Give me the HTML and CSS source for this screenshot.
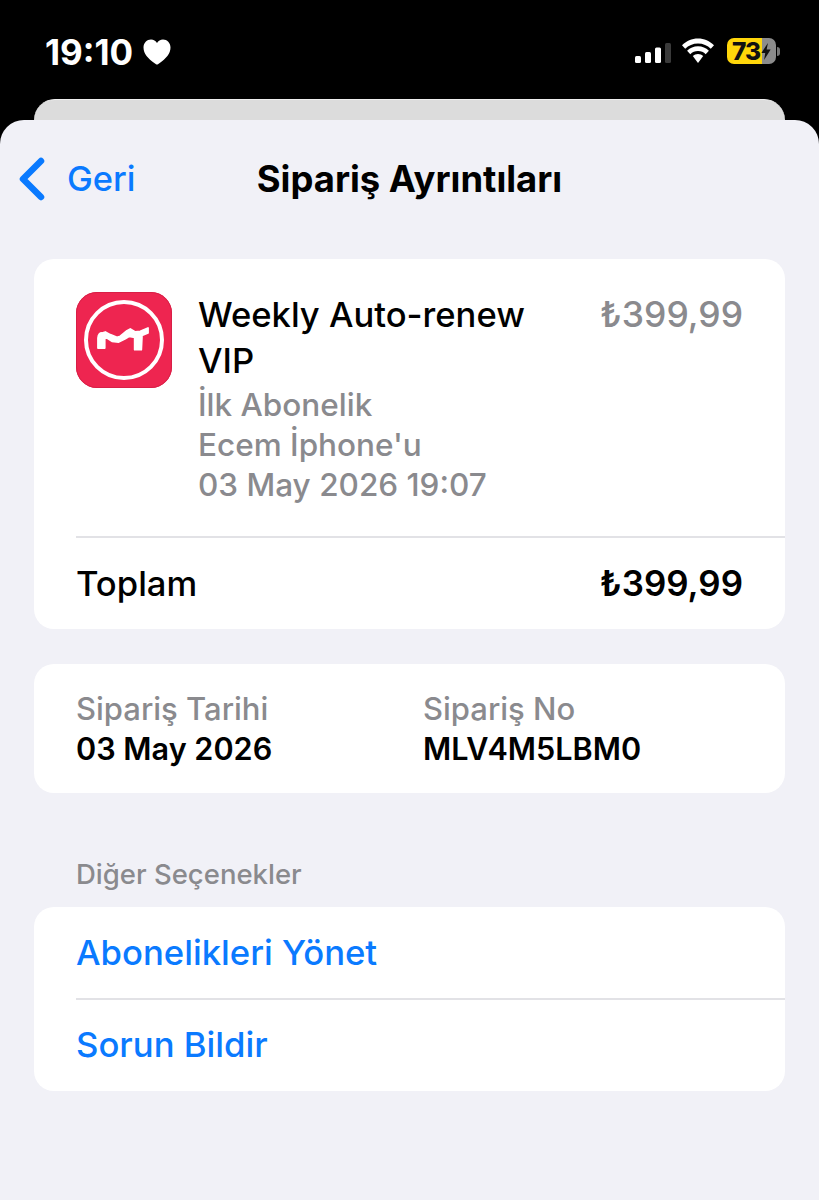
FILE: index.html
```html
<!DOCTYPE html>
<html lang="tr">
<head>
<meta charset="utf-8">
<title>Sipariş Ayrıntıları</title>
<link rel="stylesheet" href="styles.css">
</head>
<body>
<div class="phone">
  <header class="status">
    <div class="status-left">
      <span class="time">19:10</span>
      <svg class="heart" viewBox="0 0 28 26"><path d="M14 25.500C13.400 25.500 12.700 25 11.600 24.200 5 19.600 0.500 14.800 0.500 8.500 0.500 3.800 3.900 0.500 8 0.500 10.600 0.500 12.700 1.800 14 4 15.300 1.800 17.400 0.500 20 0.500 24.100 0.500 27.500 3.800 27.500 8.500 27.500 14.800 23 19.600 16.400 24.200 15.300 25 14.600 25.500 14 25.500Z" fill="#fff"/></svg>
    </div>
    <div class="status-right">
      <svg class="signal" viewBox="0 0 36 20"><rect x="0" y="13" width="6" height="7" rx="1.500" fill="#fff"/><rect x="10" y="9" width="6" height="11" rx="1.500" fill="#fff"/><rect x="20" y="4.500" width="6" height="15.500" rx="1.500" fill="#fff"/><rect x="30" y="0" width="6" height="20" rx="1.500" fill="#3a3a3a"/></svg>
      <svg class="wifi" viewBox="0 0 34 26"><path d="M17 5.500C22 5.500 26.500 7.500 29.800 10.800L33 7.300C28.800 3 23.200 0.500 17 0.500S5.200 3 1 7.300L4.200 10.800C7.500 7.500 12 5.500 17 5.500Z" fill="#fff"/><path d="M17 13C20 13 22.700 14.200 24.700 16.200L27.900 12.700C25 9.900 21.200 8.200 17 8.200S9 9.900 6.100 12.700L9.300 16.200C11.300 14.200 14 13 17 13Z" fill="#fff"/><path d="M17 16C15 16 13.200 16.800 11.800 18.100L17 25 22.200 18.100C20.800 16.800 19 16 17 16Z" fill="#fff"/></svg>
      <div class="battery">
        <div class="battery-body"><span class="battery-num">73</span>
          <svg class="bolt" viewBox="0 0 12 22"><path d="M8.500 0 0 13H5L3.500 22 12 8.500H6.800Z" fill="#111"/></svg>
        </div>
        <span class="battery-cap"></span>
      </div>
    </div>
  </header>
  <div class="sheet-back"></div>
  <main class="sheet">
    <nav class="nav">
      <a class="back">
        <svg class="chevron" viewBox="0 0 28 44"><path d="M23 4 5 22 23 40" fill="none" stroke="#0a7aff" stroke-width="6.500" stroke-linecap="round" stroke-linejoin="round"/></svg>
        <span>Geri</span>
      </a>
      <h1 class="title">Sipariş Ayrıntıları</h1>
    </nav>

    <section class="card order">
      <div class="item">
        <svg class="app-icon" viewBox="0 0 96 96">
          <rect width="96" height="96" rx="21" fill="#ee2550"/>
          <rect x="0.500" y="0.500" width="95" height="95" rx="20.500" fill="none" stroke="#d81f46" stroke-width="1"/>
          <circle cx="48" cy="48" r="38" fill="none" stroke="#fff" stroke-width="4"/>
          <path d="M22 56V46Q22.500 41 26 41L29.300 40 34.300 42.700 41 45.300 44.300 44.300 51 38.700 54.300 37 59.300 40 64.300 39.300 72 36V41L66 43.300 65.300 57.700H58.700V45.300L53.300 44.300 49.300 46.700 42.700 50 36 49.300 31 46 28.700 46.700V56Z" fill="#fff" stroke="#fff" stroke-width="1.800" stroke-linejoin="round"/>
        </svg>
        <div class="item-text">
          <div class="item-name">Weekly Auto-renew VIP</div>
          <div class="item-sub">İlk Abonelik</div>
          <div class="item-sub">Ecem İphone'u</div>
          <div class="item-sub">03 May 2026 19:07</div>
        </div>
        <div class="item-price">₺399,99</div>
      </div>
      <div class="total">
        <span>Toplam</span>
        <span class="total-price">₺399,99</span>
      </div>
    </section>

    <section class="card meta">
      <div class="meta-col">
        <div class="meta-label">Sipariş Tarihi</div>
        <div class="meta-value">03 May 2026</div>
      </div>
      <div class="meta-col">
        <div class="meta-label">Sipariş No</div>
        <div class="meta-value">MLV4M5LBM0</div>
      </div>
    </section>

    <h2 class="section-head">Diğer Seçenekler</h2>
    <section class="card links">
      <a class="link">Abonelikleri Yönet</a>
      <a class="link">Sorun Bildir</a>
    </section>
  </main>
</div>
</body>
</html>
```

FILE: styles.css
```css
* { box-sizing: border-box; }
html, body { margin: 0; padding: 0; }
body {
  background: #000;
  font-family: Inter, "Noto Sans", "Liberation Sans", sans-serif;
  color: #000;
}
.phone {
  width: 819px;
  height: 1200px;
  overflow: hidden;
  background: #000;
}
.status {
  height: 99px;
  display: flex;
  justify-content: space-between;
  align-items: flex-start;
  padding: 33px 39px 0 45px;
}
.status-left { display: flex; align-items: center; gap: 10px; }
.time {
  color: #fff;
  font-size: 35px;
  font-weight: 700;
  line-height: 38px;
}
.heart { width: 28px; height: 26px; }
.status-right { display: flex; align-items: center; padding-top: 5px; }
.signal { width: 36px; height: 20px; margin-top: 4px; }
.wifi { width: 34px; height: 26px; margin-left: 10px; }
.battery { display: flex; align-items: center; margin-left: 12px; }
.battery-body {
  width: 49px;
  height: 26px;
  border-radius: 7px;
  background: linear-gradient(90deg, #ffd60a 0 71%, #8c8c8c 71% 100%);
  display: flex;
  align-items: center;
  padding-left: 5px;
  position: relative;
}
.battery-num {
  font-size: 24.500px;
  font-weight: 800;
  line-height: 26px;
  letter-spacing: -1px;
  color: #111;
}
.bolt {
  position: absolute;
  left: 33px;
  top: 5px;
  width: 12px;
  height: 17px;
}
.battery-cap {
  width: 3px;
  height: 9px;
  margin-left: 1px;
  border-radius: 0 3px 3px 0;
  background: #777;
}
.sheet-back {
  height: 21px;
  margin: 0 34px;
  background: #dcdcdc;
  border-radius: 22px 22px 0 0;
  border-top: 1px solid #eee;
}
.sheet {
  height: 1080px;
  background: #f1f1f7;
  border-radius: 24px 24px 0 0;
  padding: 0 34px;
}
.nav {
  height: 119px;
  padding-bottom: 1px;
  display: flex;
  align-items: center;
  justify-content: center;
  position: relative;
}
.back {
  position: absolute;
  left: -16px;
  top: 36px;
  display: flex;
  align-items: center;
  gap: 21px;
  color: #0a7aff;
  font-size: 34.500px;
  font-weight: 500;
  line-height: 46px;
}
.chevron { width: 28px; height: 46px; }
.title {
  margin: 0;
  font-size: 36.400px;
  font-weight: 700;
  line-height: 44px;
}
.card {
  background: #fff;
  border-radius: 20px;
}
.order { height: 370px; margin-top: 20px; }
.item {
  height: 279px;
  margin-left: 42px;
  padding-top: 33px;
  border-bottom: 2px solid #e2e2e6;
  display: flex;
  align-items: flex-start;
}
.app-icon { width: 96px; height: 96px; flex: none; }
.item-text { width: 340px; margin: -1px 0 0 26px; }
.item-name {
  font-size: 34.600px;
  font-weight: 500;
  line-height: 46px;
  margin-bottom: 2px;
}
.item-sub {
  font-size: 31.500px;
  font-weight: 500;
  line-height: 40px;
  color: #8a8a8e;
}
.item-price {
  margin-left: auto;
  padding-right: 42px;
  font-size: 35.500px;
  font-weight: 500;
  line-height: 46px;
  color: #8a8a8e;
}
.total {
  height: 91px;
  margin-left: 42px;
  padding: 0 42px 1px 0;
  display: flex;
  align-items: center;
  justify-content: space-between;
  font-size: 34.600px;
  font-weight: 500;
}
.total-price { font-size: 34.900px; font-weight: 600; }
.meta {
  height: 129px;
  margin-top: 35px;
  padding: 25px 42px 0;
  display: flex;
}
.meta-col:first-child { width: 347px; }
.meta-label {
  font-size: 31px;
  font-weight: 500;
  line-height: 40px;
  color: #8a8a8e;
}
.meta-value {
  font-size: 30.600px;
  font-weight: 600;
  line-height: 40px;
}
.section-head {
  margin: 62px 0 14px 42px;
  font-size: 27.500px;
  font-weight: 500;
  line-height: 38px;
  color: #8a8a8e;
}
.links { height: 184px; }
.link {
  display: block;
  height: 91px;
  margin-left: 42px;
  color: #0a7aff;
  font-size: 34.700px;
  font-weight: 500;
  line-height: 88px;
}
.link:first-child {
  height: 93px;
  line-height: 90px;
  border-bottom: 2px solid #e2e2e6;
}
```
